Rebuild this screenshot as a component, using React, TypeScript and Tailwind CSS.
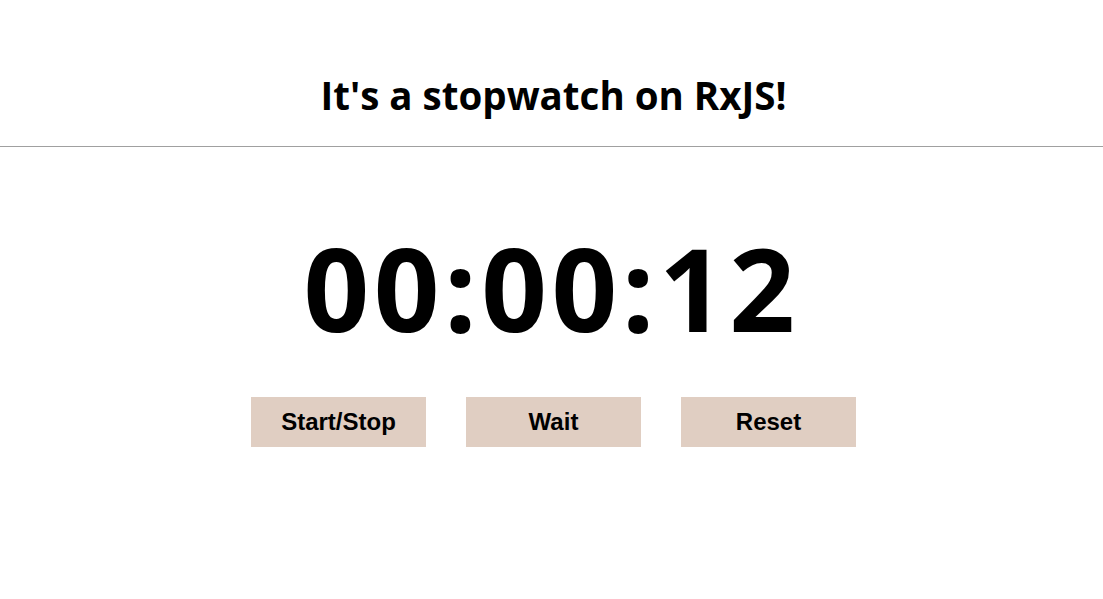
import { useState } from "react";

const buttons = ["Start/Stop", "Wait", "Reset"];

export default function App() {
  const [time] = useState("00:00:12");

  return (
    <div className="min-h-screen bg-white text-black">
      <header className="flex h-[147px] items-center justify-center border-b border-[#a0a0a0] pt-[44px] pl-[4px]">
        <h1 className="font-['Open_Sans','Noto_Sans',sans-serif] text-[38.5px] font-bold leading-none">
          It's a stopwatch on RxJS!
        </h1>
      </header>
      <main className="flex flex-col items-center">
        <div className="mt-[66px] font-['Open_Sans','Noto_Sans',sans-serif] text-[115px] font-bold leading-[150px] tracking-[4.5px]">
          {time}
        </div>
        <div className="mt-[34px] ml-[4px] flex gap-10">
          {buttons.map((label) => (
            <button
              key={label}
              className="h-[50px] w-[175px] bg-[#e0cec2] pb-[1px] font-['Liberation_Sans',Arial,sans-serif] text-[24px] font-bold"
            >
              {label}
            </button>
          ))}
        </div>
      </main>
    </div>
  );
}
